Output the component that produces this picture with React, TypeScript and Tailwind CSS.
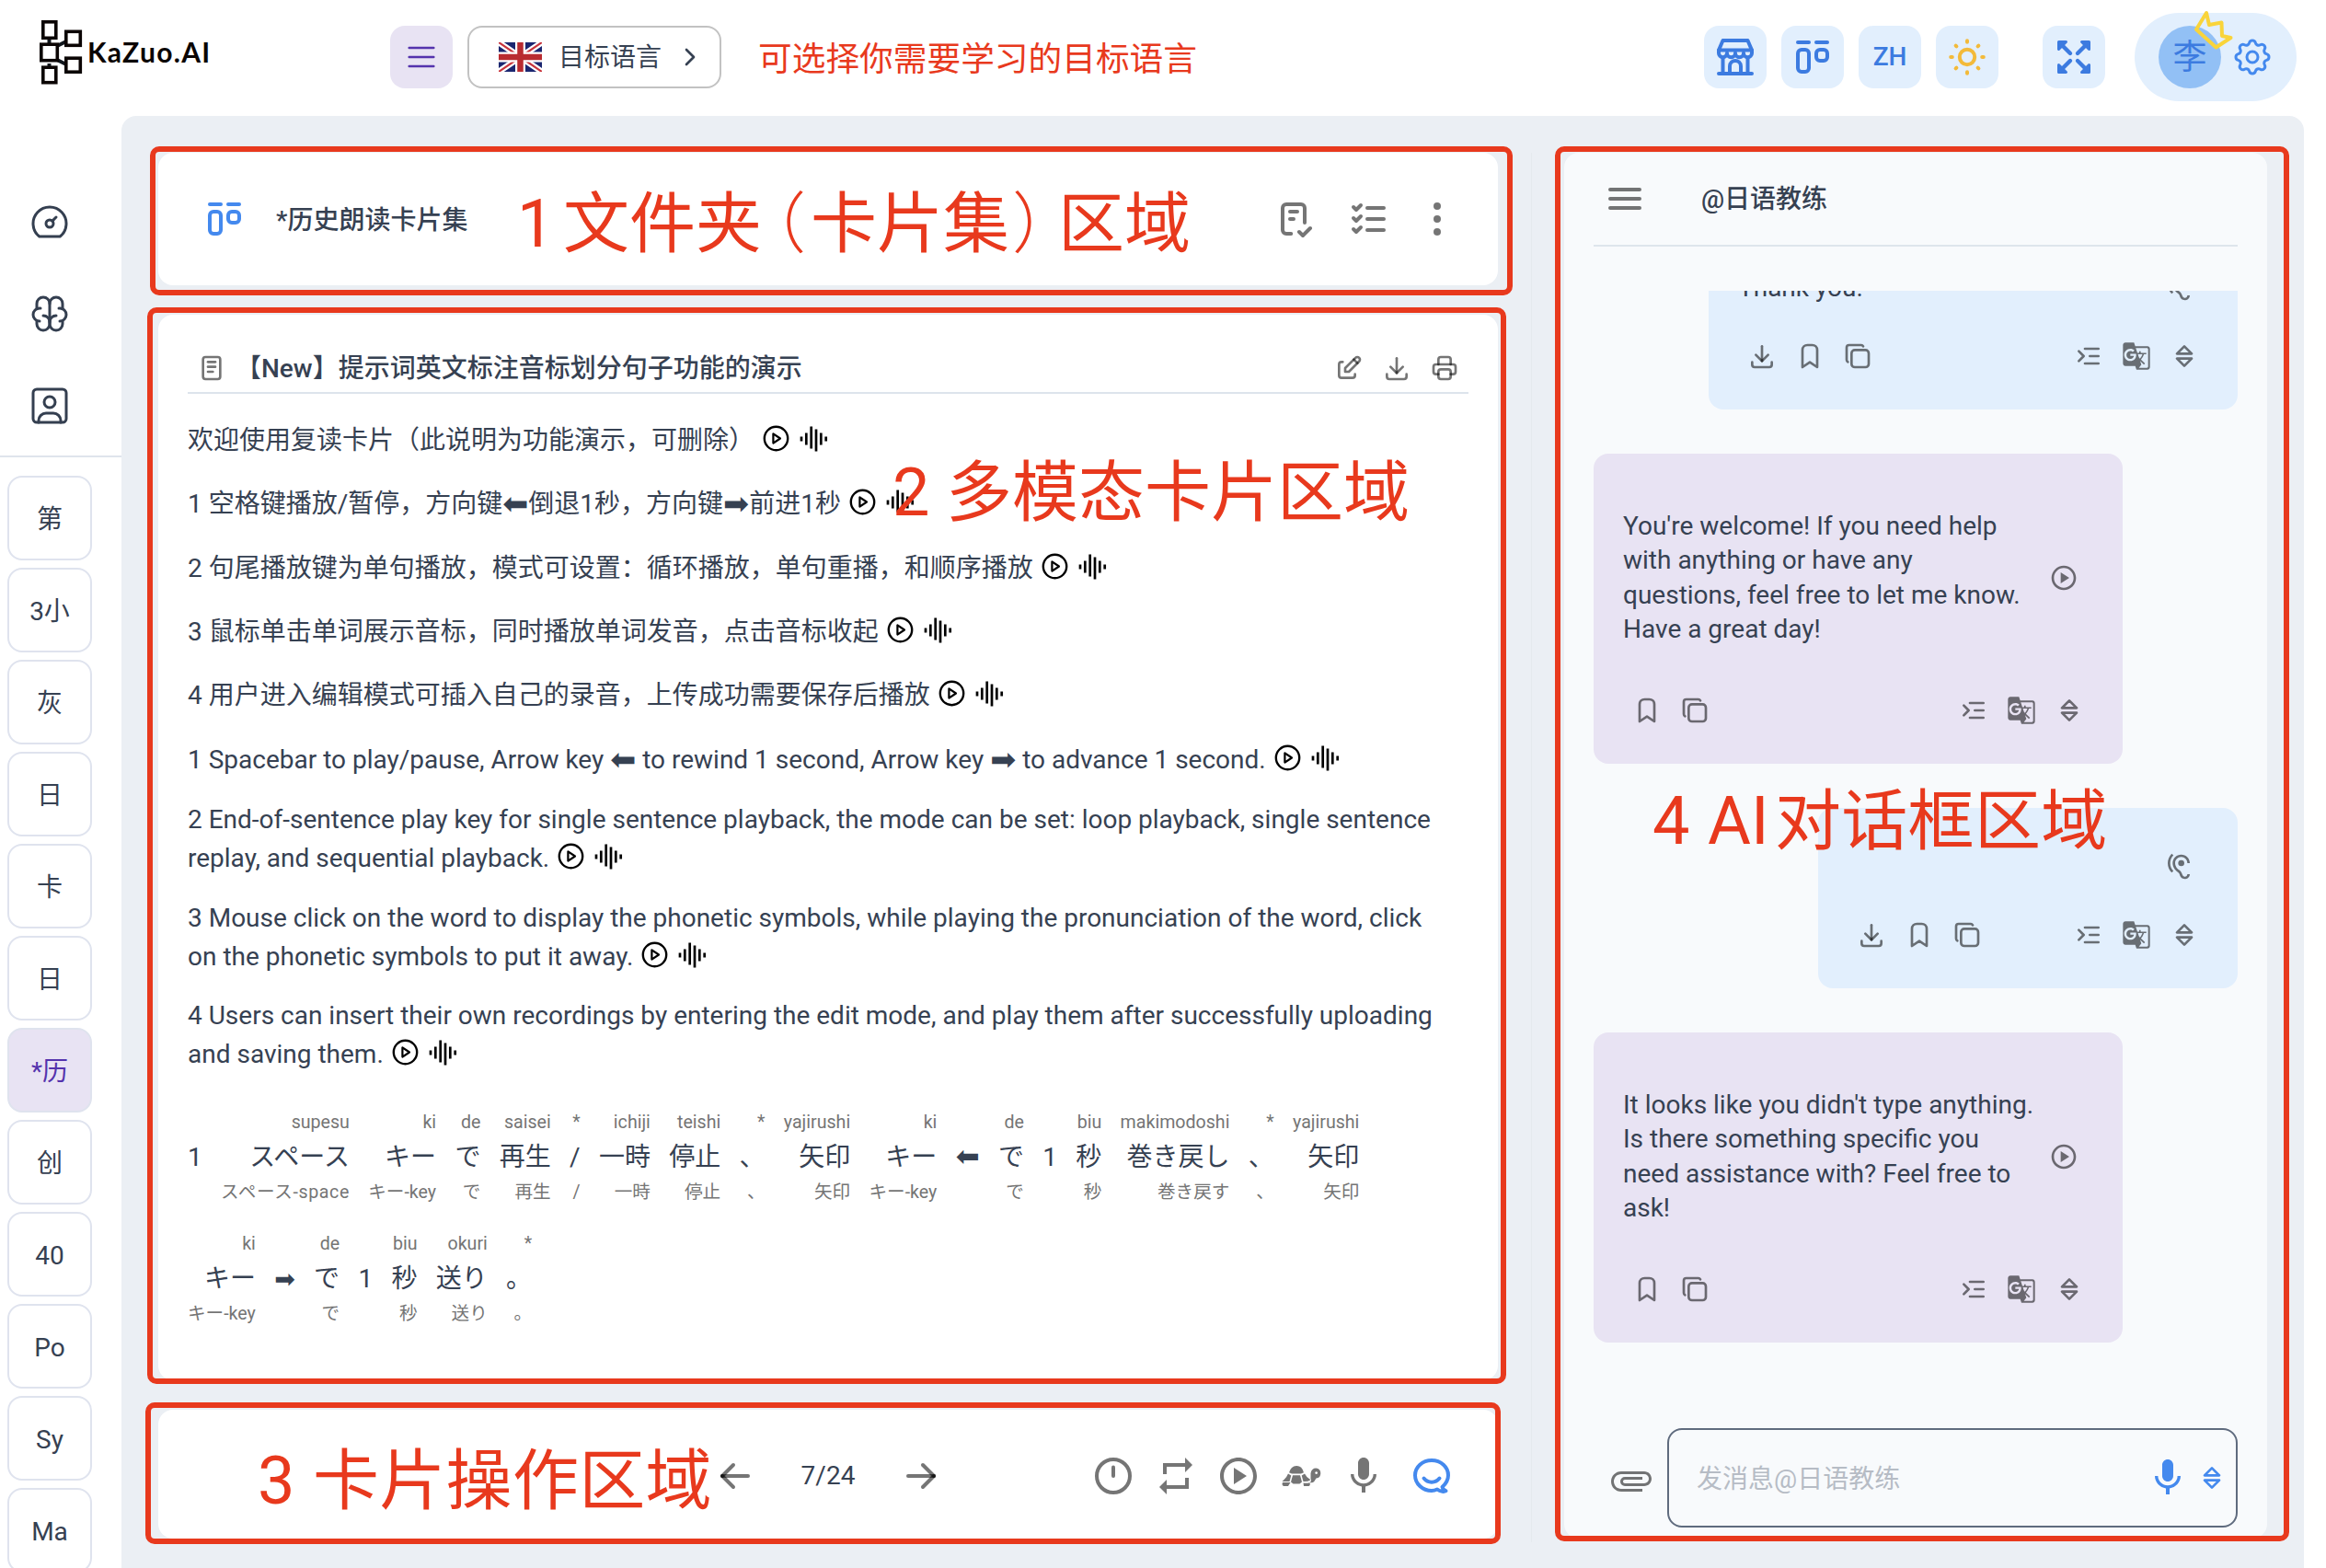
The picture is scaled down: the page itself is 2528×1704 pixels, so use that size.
import React from 'react';
import {
  TbArrowLeft,
  TbArrowRight,
  TbBookmark,
  TbBrain,
  TbCaretUpDown,
  TbChecklist,
  TbChevronRight,
  TbCopy,
  TbDashboard,
  TbDotsVertical,
  TbDownload,
  TbEdit,
  TbIndentIncrease,
  TbLayoutKanban,
  TbListCheck,
  TbMenu2,
  TbNotes,
  TbPrinter,
  TbSettings,
  TbUserSquare,
} from 'react-icons/tb';
import { MdAttachFile, MdGTranslate, MdHearing, MdMic, MdOutlinePlayCircle, MdRepeat } from 'react-icons/md';

function Logo() {
  return (
    <svg width="52" height="76" viewBox="0 0 52 76" fill="none" stroke="#0b0504" strokeWidth="3.6">
      <path d="M13.5 24v6M13.5 50v5M22 31l9-4.500M22 46l9 4.500" stroke="#10161c" strokeWidth="4" />
      <rect x="6.800" y="4.800" width="14" height="17.500" />
      <rect x="4.800" y="29.200" width="17.500" height="17.500" />
      <rect x="31.800" y="15.300" width="15.500" height="15" />
      <rect x="31.800" y="44.200" width="15.500" height="15" />
      <rect x="6.800" y="54.200" width="14" height="16.500" />
    </svg>
  );
}

function Flag() {
  return (
    <svg width="47" height="32" viewBox="0 0 47 32">
      <rect width="47" height="32" fill="#1b2670" />
      <path d="M0 0L47 32M47 0L0 32" stroke="#fff" strokeWidth="6.500" />
      <path d="M0 0L23.500 16M47 0L23.500 16M0 32L23.500 16M47 32L23.500 16" stroke="#c8343c" strokeWidth="2.200" />
      <path d="M23.500 0V32M0 16H47" stroke="#fff" strokeWidth="11" />
      <path d="M23.500 0V32M0 16H47" stroke="#b92b30" strokeWidth="6.500" />
    </svg>
  );
}

function StoreIcon() {
  return (
    <svg width="48" height="48" viewBox="0 0 48 48" fill="none" stroke="currentColor" strokeWidth="4" strokeLinejoin="round" strokeLinecap="round">
      <path d="M10.500 6h27l4.500 10.500H6z" />
      <path d="M6 16.500v3.200a4.500 4.500 0 0 0 9 0a4.500 4.500 0 0 0 9 0a4.500 4.500 0 0 0 9 0a4.500 4.500 0 0 0 9 0v-3.200" />
      <path d="M15 17v3M24 17v3M33 17v3" strokeWidth="2.600" />
      <path d="M10.500 25v16.500M37.500 25v16.500M6 42h36" />
      <path d="M18 41v-7a6 6 0 0 1 12 0v7" />
    </svg>
  );
}

function SunIcon() {
  return (
    <svg width="48" height="48" viewBox="0 0 48 48" fill="none" stroke="currentColor" strokeWidth="4" strokeLinecap="round">
      <circle cx="24" cy="24" r="8.200" />
      <path d="M24 6.200v1.600M24 40.200v1.600M6.200 24h1.600M40.200 24h1.600M11.600 11.600l.8.8M35.600 35.600l.8.8M36.400 11.600l-.8.8M12.400 35.600l-.8.8" />
    </svg>
  );
}

function ExpandIcon() {
  return (
    <svg width="48" height="48" viewBox="0 0 48 48" fill="currentColor" stroke="currentColor" strokeLinecap="round" strokeLinejoin="round">
      <path d="M7.500 7.500h8l-8 8zM40.500 7.500v8l-8-8zM7.500 40.500v-8l8 8zM40.500 40.500h-8l8-8z" strokeWidth="3" />
      <path d="M11 11l9 9M37 11l-9 9M11 37l9-9M37 37l-9-9" strokeWidth="4.400" />
    </svg>
  );
}

function PlayMark() {
  return (
    <svg className="mx-[2px] inline-block align-[-3px]" width="29" height="29" viewBox="0 0 29 29" fill="none" stroke="#000">
      <circle cx="14.500" cy="14.500" r="12.700" strokeWidth="2.400" />
      <path d="M11.400 9.400v10.200l7.600-5.100z" strokeWidth="2.200" strokeLinejoin="round" />
    </svg>
  );
}

function WaveMark() {
  return (
    <svg className="ml-[9px] inline-block align-[-3px]" width="31" height="28" viewBox="0 0 31 28" stroke="#000" strokeWidth="2.700">
      <path d="M2 11.500v5M7.300 7.500v13M12.700 .5v24M18 3.500v24M23.300 7.500v13M28.700 11.500v5" />
    </svg>
  );
}

function Marks() {
  return (
    <span className="whitespace-nowrap">
      {' '}
      <PlayMark />
      <WaveMark />
    </span>
  );
}

function TimerIcon() {
  return (
    <svg width="48" height="48" viewBox="0 0 48 48" fill="none" stroke="currentColor" strokeWidth="4" strokeLinecap="round">
      <circle cx="24" cy="24" r="18" />
      <path d="M24 14.500v9.500" />
    </svg>
  );
}

function TurtleIcon() {
  return (
    <svg width="48" height="48" viewBox="0 0 48 48" fill="currentColor">
      <path d="M11 20.300Q13 13.300 19 13T27 20.300L24 21.600H14z" />
      <path d="M10 21.600l3.300 1.800L11.500 30H3.500l2-2Q8.500 25.500 10 21.600zM28 21.600l-3.300 1.800L26.500 30q4.500.4 8-1.800Q30 26 28 21.600zM15 23.200h8l2 7.300-2.500 2h-7l-2.500-2z" />
      <path d="M4 31h8.500L10 35H5q-2.300-1.500-1-4zM26.500 31.600q4 .6 7-.4 1 3.200-1 3.800h-5.500z" />
      <path fillRule="evenodd" d="M34.500 21Q35.500 15.500 40.300 15.500 45.300 16 45.300 21T40.500 26.500L38.300 30Q36.500 32 33.500 31 36 29.500 34.500 27zM40.600 19.200a1.400 1.400 0 1 0 .1 0z" />
    </svg>
  );
}

function ChatIcon() {
  return (
    <svg width="48" height="48" viewBox="0 0 48 48" fill="none" stroke="currentColor" strokeWidth="4" strokeLinecap="round" strokeLinejoin="round">
      <path d="M35.500 36c.5 2.800 2.500 3 4 4.200c-1.500 1-6 1.200-9.500-1.700C28 39.500 26 40 24 40C14 40 6 32.300 6 23.200C6 14.200 14 7 24 7s18 7.200 18 16.200c0 5-2.600 9.200-6.500 12.800z" />
      <path d="M15.500 26.500c4.500 5.500 12.500 5.500 17 0" />
    </svg>
  );
}

const decks = ['第', '3小', '灰', '日', '卡', '日', '*历', '创', '40', 'Po', 'Sy', 'Ma'];

function Sidebar() {
  return (
    <aside className="flex w-[132px] shrink-0 flex-col">
      <div className="flex flex-col gap-[52px] pt-[91px] pl-[30px] text-[#343f50]">
        <TbDashboard size={48} strokeWidth={1.5} />
        <TbBrain size={48} strokeWidth={1.5} />
        <TbUserSquare size={48} strokeWidth={1.5} />
      </div>
      <div className="mt-[30px] h-[2px] shrink-0 bg-[#dfe4ec]" />
      <div className="mt-5 flex flex-col gap-2 pl-2">
        {decks.map((d, i) => (
          <div
            key={i}
            className={
              d === '*历'
                ? 'flex h-[92px] w-[92px] shrink-0 items-center justify-center rounded-2xl border-2 border-[#dfe3ee] bg-[#e8e3f3] pt-[3px] text-[#5433ad]'
                : 'flex h-[92px] w-[92px] shrink-0 items-center justify-center rounded-2xl border-2 border-[#dfe3ee] bg-white pt-[3px]'
            }
          >
            {d}
          </div>
        ))}
      </div>
    </aside>
  );
}

function Header() {
  return (
    <header className="flex h-[124px] shrink-0 items-center">
      <div className="flex w-[424px] items-center pl-10">
        <div className="mt-[-10px]">
          <Logo />
        </div>
        <span className="mt-[-12px] ml-[3px] font-['Lato'] text-[30px] font-bold tracking-[1.3px] text-[#0b0504]">KaZuo.AI</span>
      </div>
      <div className="flex h-[68px] w-[68px] items-center justify-center rounded-2xl bg-[#e8e3f3] text-[#5433ad]">
        <TbMenu2 size={40} strokeWidth={1.5} />
      </div>
      <div className="ml-4 flex h-[68px] w-[276px] items-center rounded-2xl border-2 border-[#c2c2c2] pl-8">
        <Flag />
        <span className="mt-px ml-[18px] w-[112px]">目标语言</span>
        <TbChevronRight className="ml-[15px]" size={32} />
      </div>
      <span className="mt-[6px] ml-10 text-[36.7px] whitespace-nowrap text-[#e8391d]">可选择你需要学习的目标语言</span>
      <div className="mr-8 ml-auto flex items-center text-[#3c7be0]">
        <div className="flex gap-4">
          <div className="flex h-[68px] w-[68px] items-center justify-center rounded-2xl bg-[#e2effd]">
            <StoreIcon />
          </div>
          <div className="flex h-[68px] w-[68px] items-center justify-center rounded-2xl bg-[#e2effd]">
            <TbLayoutKanban size={48} />
          </div>
          <div className="flex h-[68px] w-[68px] items-center justify-center rounded-2xl bg-[#e2effd] font-medium">ZH</div>
          <div className="flex h-[68px] w-[68px] items-center justify-center rounded-2xl bg-[#e2effd] text-[#f3ba3a]">
            <SunIcon />
          </div>
        </div>
        <div className="ml-12 flex h-[68px] w-[68px] items-center justify-center rounded-2xl bg-[#e2effd]">
          <ExpandIcon />
        </div>
        <div className="relative ml-8 flex h-24 w-44 items-center rounded-full bg-[#e2effd] pl-[26px]">
          <div className="flex h-[68px] w-[68px] items-center justify-center rounded-full bg-[#92c0f5] pt-px text-[37px]">李</div>
          <TbSettings className="ml-[10px] text-[#4489ee]" size={48} strokeWidth={1.5} />
          <svg className="absolute top-[-6px] left-[60px]" width="50" height="50" viewBox="0 0 50 50" fill="none" stroke="#f9d43a" strokeWidth="4" strokeLinejoin="round">
            <path d="M18 6l3 13l13.500-2.500l.5 14.500l9.500 2L28.500 43.500L7 24z" />
          </svg>
        </div>
      </div>
    </header>
  );
}

type Word = [string, string, string];

const rowOne: Word[] = [
  ['', '1', ''],
  ['supesu', 'スペース', 'スペース-space'],
  ['ki', 'キー', 'キー-key'],
  ['de', 'で', 'で'],
  ['saisei', '再生', '再生'],
  ['*', '/', '/'],
  ['ichiji', '一時', '一時'],
  ['teishi', '停止', '停止'],
  ['*', '、', '、'],
  ['yajirushi', '矢印', '矢印'],
  ['ki', 'キー', 'キー-key'],
  ['', '⬅', ''],
  ['de', 'で', 'で'],
  ['', '1', ''],
  ['biu', '秒', '秒'],
  ['makimodoshi', '巻き戻し', '巻き戻す'],
  ['*', '、', '、'],
  ['yajirushi', '矢印', '矢印'],
];

const rowTwo: Word[] = [
  ['ki', 'キー', 'キー-key'],
  ['', '➡', ''],
  ['de', 'で', 'で'],
  ['', '1', ''],
  ['biu', '秒', '秒'],
  ['okuri', '送り', '送り'],
  ['*', '。', '。'],
];

function WordRow({ words }: { words: Word[] }) {
  return (
    <div className="flex h-[132px] gap-[20.3px] font-['Roboto','Noto_Sans_CJK_JP',sans-serif]" lang="ja">
      {words.map(([top, mid, bottom], i) => (
        <div key={i} className="flex flex-col items-end whitespace-nowrap">
          <span className="h-[34px] text-[19.6px] leading-[34px] text-[#757575]">{top}</span>
          <span className="h-[42px] leading-[42px]">
            {mid === '⬅' && <span className="font-['DejaVu_Sans'] text-[31px] leading-none">⬅</span>}
            {mid === '➡' && <span className="font-['DejaVu_Sans'] text-[27px] leading-none">➡</span>}
            {mid !== '⬅' && mid !== '➡' && mid}
          </span>
          <span className={bottom === 'スペース-space' ? 'h-[34px] text-[19.6px] leading-[34px] tracking-[0.6px] text-[#757575]' : 'h-[34px] text-[19.6px] leading-[34px] text-[#757575]'}>
            {bottom}
          </span>
        </div>
      ))}
    </div>
  );
}

function Arrow({ glyph }: { glyph: string }) {
  return <span className="align-[-2px] font-['DejaVu_Sans'] text-[33.5px] leading-none">{glyph}</span>;
}

function FolderBar() {
  return (
    <section className="flex h-[144px] shrink-0 items-center rounded-2xl bg-white pr-[42px] pl-12">
      <TbLayoutKanban className="text-[#4489ee]" size={48} />
      <span className="mt-[3px] ml-8 font-medium">*历史朗读卡片集</span>
      <div className="ml-auto flex items-center text-black/54">
        <TbChecklist size={48} />
        <TbListCheck className="ml-8" size={48} />
        <TbDotsVertical className="ml-[26px]" size={48} />
      </div>
    </section>
  );
}

function CardPanel() {
  return (
    <section className="mt-8 flex h-[1158px] shrink-0 flex-col rounded-2xl bg-white px-8">
      <div className="flex h-[86px] shrink-0 items-center border-b-2 border-[#dde4ec] pt-[32px] pr-[10px] pl-[10px]">
        <TbNotes className="text-black/54" size={32} />
        <span className="mt-[2px] ml-[10px] font-medium">【New】提示词英文标注音标划分句子功能的演示</span>
        <div className="ml-auto flex gap-5 text-black/54">
          <TbEdit size={32} />
          <TbDownload size={32} />
          <TbPrinter size={32} />
        </div>
      </div>
      <div className="flex flex-col leading-[42px] whitespace-nowrap">
        <p className="mt-[30px] h-[42px]">欢迎使用复读卡片（此说明为功能演示，可删除）<Marks /></p>
        <p className="mt-[27px] h-[42px]">
          1 空格键播放/暂停，方向键<Arrow glyph="⬅" />倒退1秒，方向键<Arrow glyph="➡" />前进1秒<Marks />
        </p>
        <p className="mt-[28px] h-[42px]">2 句尾播放键为单句播放，模式可设置：循环播放，单句重播，和顺序播放<Marks /></p>
        <p className="mt-[27px] h-[42px]">3 鼠标单击单词展示音标，同时播放单词发音，点击音标收起<Marks /></p>
        <p className="mt-[27px] h-[42px]">4 用户进入编辑模式可插入自己的录音，上传成功需要保存后播放<Marks /></p>
        <p className="mt-[28px] h-[42px]">
          1 Spacebar to play/pause, Arrow key <Arrow glyph="⬅" /> to rewind 1 second, Arrow key <Arrow glyph="➡" /> to advance 1 second.<Marks />
        </p>
        <p className="mt-[23px] h-[84px]">
          2 End-of-sentence play key for single sentence playback, the mode can be set: loop playback, single sentence
          <br />
          replay, and sequential playback.<Marks />
        </p>
        <p className="mt-[23px] h-[84px]">
          3 Mouse click on the word to display the phonetic symbols, while playing the pronunciation of the word, click
          <br />
          on the phonetic symbols to put it away.<Marks />
        </p>
        <p className="mt-[22px] h-[84px]">
          4 Users can insert their own recordings by entering the edit mode, and play them after successfully uploading
          <br />
          and saving them.<Marks />
        </p>
      </div>
      <div className="mt-9">
        <WordRow words={rowOne} />
        <WordRow words={rowTwo} />
      </div>
    </section>
  );
}

function OperationBar() {
  return (
    <section className="mt-8 flex h-[140px] shrink-0 items-center rounded-2xl bg-white pt-1">
      <div className="ml-[603px] flex items-center">
        <TbArrowLeft className="text-black/54" size={48} />
        <span className="w-[154px] text-center">7/24</span>
        <TbArrowRight className="text-black/54" size={48} />
      </div>
      <div className="mr-12 ml-auto flex items-center gap-5 text-black/54">
        <TimerIcon />
        <MdRepeat size={48} />
        <MdOutlinePlayCircle size={48} />
        <TurtleIcon />
        <MdMic size={48} />
        <div className="ml-[6px] text-[#4489ee]">
          <ChatIcon />
        </div>
      </div>
    </section>
  );
}

function MessageTools({ download }: { download?: boolean }) {
  return (
    <div className="flex h-8 shrink-0 items-center gap-5">
      {download && <TbDownload size={32} />}
      <TbBookmark size={32} />
      <TbCopy size={32} />
      <div className="ml-auto flex gap-5">
        <TbIndentIncrease size={32} />
        <MdGTranslate size={32} />
        <TbCaretUpDown size={32} />
      </div>
    </div>
  );
}

function CoachMessage({ lines }: { lines: string[] }) {
  return (
    <div className="mt-12 flex h-[337px] w-[575px] shrink-0 flex-col justify-between rounded-2xl bg-[#e8e3f3] px-[42px] pt-[60px] pb-[42px] text-black/54">
      <div className="ml-[-10px] flex items-center justify-between pr-[6px]">
        <div className="leading-[37.33px] whitespace-nowrap text-[#364152]">
          {lines.map((l) => (
            <div key={l}>{l}</div>
          ))}
        </div>
        <MdOutlinePlayCircle size={32} />
      </div>
      <MessageTools />
    </div>
  );
}

function ChatPanel() {
  return (
    <section className="flex h-[1506px] w-[764px] shrink-0 flex-col rounded-2xl bg-[#f8fafc] px-8">
      <div className="flex h-[102px] shrink-0 items-center border-b-2 border-[#dee5ec] pl-[10px]">
        <svg className="text-black/54" width="48" height="48" viewBox="0 0 48 48" stroke="currentColor" strokeWidth="4" strokeLinecap="round">
          <path d="M8 14h32M8 24h32M8 34h32" />
        </svg>
        <span className="mt-[2px] ml-[59px] font-medium">@日语教练</span>
      </div>
      <div className="mt-12 flex h-[1160px] shrink-0 flex-col overflow-hidden">
        <div className="mt-[-67px] flex h-[196px] w-[575px] shrink-0 flex-col justify-between self-end rounded-2xl bg-[#e2effd] px-[42px] pt-[45px] pb-[42px] text-black/54">
          <div className="ml-[-10px] flex items-center justify-between pr-[6px]">
            <span className="leading-[37px] text-[#364152]">Thank you.</span>
            <MdHearing size={32} />
          </div>
          <MessageTools download />
        </div>
        <CoachMessage
          lines={["You're welcome! If you need help", 'with anything or have any', 'questions, feel free to let me know.', 'Have a great day!']}
        />
        <div className="mt-12 flex h-[196px] w-[456px] shrink-0 flex-col justify-between self-end rounded-2xl bg-[#e2effd] px-[42px] pt-12 pb-[42px] text-black/54">
          <div className="flex justify-end pr-[6px]">
            <MdHearing size={32} />
          </div>
          <MessageTools download />
        </div>
        <CoachMessage
          lines={["It looks like you didn't type anything.", 'Is there something specific you', 'need assistance with? Feel free to', 'ask!']}
        />
      </div>
      <div className="mt-[76px] flex items-center">
        <MdAttachFile className="mt-[6px] ml-[17px] rotate-90 text-black/54" size={48} />
        <div className="ml-[15px] flex h-[108px] w-[620px] items-center rounded-2xl border-2 border-[#5f6b7e] pr-[10px] pl-[30px] text-[#b6bcc5]">
          <span className="mt-[4px]">发消息@日语教练</span>
          <div className="ml-auto flex items-center gap-2 text-[#4489ee]">
            <MdMic size={48} />
            <TbCaretUpDown size={32} />
          </div>
        </div>
      </div>
    </section>
  );
}

/* Red frames and captions that lie over the page */
function Annotations() {
  return (
    <div className="pointer-events-none absolute inset-0 text-[72px] leading-[100px] whitespace-nowrap text-[#e8391d]">
      <div className="absolute top-[159px] left-[163px] h-[162px] w-[1481px] rounded-[10px] border-[6px] border-[#e8391d]" />
      <div className="absolute top-[334px] left-[160px] h-[1170px] w-[1477px] rounded-[10px] border-[6px] border-[#e8391d]" />
      <div className="absolute top-[1524px] left-[158px] h-[154px] w-[1473px] rounded-[10px] border-[6px] border-[#e8391d]" />
      <div className="absolute top-[159px] left-[1690px] h-[1516px] w-[798px] rounded-[10px] border-[6px] border-[#e8391d]" />
      <div className="absolute top-[194px] left-[562px] flex">
        <span className="w-[50px]">1</span>
        <span>文件夹</span>
        <span className="w-[53px] pl-[12px] font-light [font-feature-settings:'halt']">（</span>
        <span>卡片集</span>
        <span className="w-[53px] pl-[3px] font-light [font-feature-settings:'halt']">）</span>
        <span>区域</span>
      </div>
      <div className="absolute top-[486px] left-[970px] flex">
        <span className="w-[58px]">2</span>
        <span>多模态卡片区域</span>
      </div>
      <div className="absolute top-[1560px] left-[280px] flex">
        <span className="w-[60px]">3</span>
        <span className="tracking-[0.3px]">卡片操作区域</span>
      </div>
      <div className="absolute top-[843px] left-[1796px] flex">
        <span className="w-[60px]">4</span>
        <span className="w-[73px]">AI</span>
        <span className="tracking-[0.3px]">对话框区域</span>
      </div>
    </div>
  );
}

export default function App() {
  return (
    <div
      className="relative flex h-[1704px] w-[2528px] flex-col overflow-hidden bg-white font-['Roboto','Noto_Sans_CJK_SC',sans-serif] text-[28px] leading-[42px] text-[#364152]"
      lang="zh-CN"
    >
      <Header />
      <div className="mt-[2px] flex h-[1578px] shrink-0">
        <Sidebar />
        <main className="flex w-[2372px] rounded-t-2xl bg-[#ebeff4] pt-10 pl-10">
          <div className="flex w-[1456px] shrink-0 flex-col">
            <FolderBar />
            <CardPanel />
            <OperationBar />
          </div>
          <div className="mr-[35px] ml-9 h-[1510px] w-px shrink-0 bg-[#e4eaee]" />
          <ChatPanel />
        </main>
      </div>
      <Annotations />
    </div>
  );
}
